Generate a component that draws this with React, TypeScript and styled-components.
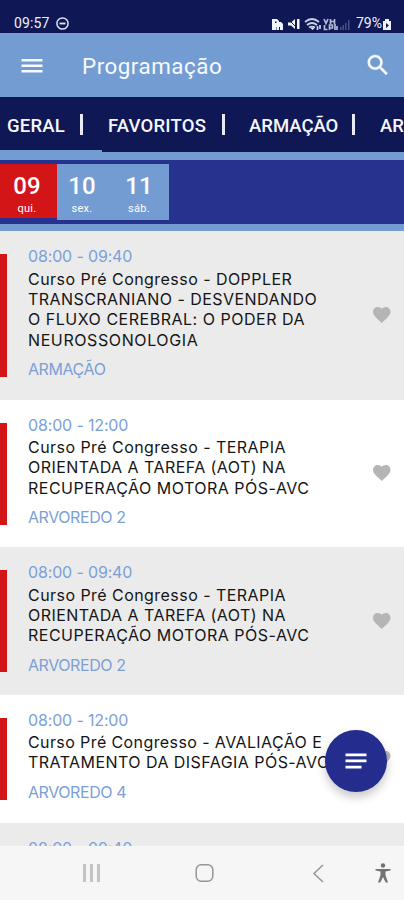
import React from "react";
import styled, { createGlobalStyle } from "styled-components";

const Global = createGlobalStyle`
  * { box-sizing: border-box; }
  body { margin: 0; font-family: Roboto, "Liberation Sans", sans-serif; }
`;

const Screen = styled.div`
  position: relative;
  width: 404px;
  height: 900px;
  overflow: hidden;
  display: flex;
  flex-direction: column;
  background: #fff;
`;

const StatusBar = styled.header`
  flex: none;
  height: 33px;
  padding: 14px 12px 0 14px;
  display: flex;
  justify-content: space-between;
  background: #0f1855;
  color: #eef0fa;
  font-size: 14px;
  line-height: 19px;
`;

const StatusGroup = styled.div<{ $gap: number }>`
  display: flex;
  align-items: center;
  height: 19px;
  gap: ${(p) => p.$gap}px;
`;

const Clock = styled.span`
  letter-spacing: 0.15px;
`;

const Battery = styled.span`
  letter-spacing: 0;
`;

const AppBar = styled.div`
  flex: none;
  height: 64px;
  padding: 2px 14px 0 21px;
  display: flex;
  align-items: center;
  background: #739cd3;
  color: #f8faff;
  svg { display: block; }
`;

const Title = styled.h1`
  flex: 1;
  margin: 0 0 0 39px;
  font-size: 22.4px;
  font-weight: 400;
  letter-spacing: 0.5px;
`;

const TabBar = styled.nav`
  flex: none;
  height: 63px;
  display: flex;
  overflow: hidden;
  background: linear-gradient(#0f1855 55px, #739cd3 55px);
`;

const Tab = styled.div<{ $width: number; $pad: number; $active?: boolean; $spacing?: number }>`
  flex: none;
  width: ${(p) => p.$width}px;
  height: 56px;
  padding: ${(p) => (p.$active ? "4px" : "1px")} 0 0 ${(p) => p.$pad}px;
  display: flex;
  align-items: center;
  white-space: nowrap;
  color: #f5f6fc;
  font-size: 18.5px;
  font-weight: 500;
  letter-spacing: ${(p) => p.$spacing ?? 0}px;
  border-bottom: ${(p) => (p.$active ? "3px solid #739cd3" : "0")};
`;

const Divider = styled.i<{ $gap: number }>`
  width: 3px;
  height: 21px;
  margin-left: ${(p) => p.$gap}px;
  margin-top: -2px;
  background: #e9eaf3;
`;

const DateBar = styled.div`
  flex: none;
  height: 71px;
  padding-top: 4px;
  display: flex;
  background: #27328e;
  border-bottom: 7px solid #739cd3;
`;

const Day = styled.div<{ $selected?: boolean; $left: number; $width: number }>`
  width: ${(p) => p.$width}px;
  height: ${(p) => (p.$selected ? 54 : 56)}px;
  padding: 9px 0 0 ${(p) => p.$left}px;
  background: ${(p) => (p.$selected ? "#d31518" : "#739cd3")};
  color: #fff;
`;

const DayStack = styled.div`
  width: 30px;
  display: flex;
  flex-direction: column;
  align-items: center;
`;

const DayNumber = styled.b`
  font-size: 24px;
  line-height: 26px;
  font-weight: 500;
`;

const DayName = styled.span`
  font-size: 11px;
  line-height: 20px;
  letter-spacing: 0.3px;
`;

const List = styled.main`
  flex: 1;
  min-height: 0;
  overflow: hidden;
`;

const Row = styled.article<{ $shade: boolean; $height: number }>`
  height: ${(p) => p.$height}px;
  display: flex;
  align-items: stretch;
  background: ${(p) => (p.$shade ? "#ebebeb" : "#ffffff")};
`;

const Marker = styled.i`
  flex: none;
  width: 7px;
  margin: 23px 0 22.5px;
  background: #d31518;
`;

const Details = styled.div`
  width: 354px;
  padding: 15.4px 0 0 21px;
  font-family: Inter, Roboto, sans-serif;
  font-size: 16px;
  line-height: 20.3px;
  white-space: nowrap;
`;

const Time = styled.div`
  margin-bottom: 2px;
  color: #7b9fd7;
  letter-spacing: -0.15px;
`;

const Line = styled.div<{ $spacing?: number }>`
  color: #151515;
  letter-spacing: ${(p) => p.$spacing ?? 0.45}px;
`;

const Place = styled.div`
  margin-top: 9px;
  color: #7b9fd7;
  letter-spacing: -0.42px;
`;

const Favorite = styled.div`
  width: 42px;
  display: flex;
  align-items: center;
  justify-content: center;
`;

const Fab = styled.button`
  position: absolute;
  left: 324.5px;
  top: 729.5px;
  width: 62px;
  height: 62px;
  padding: 0;
  border: 0;
  border-radius: 50%;
  display: flex;
  align-items: center;
  justify-content: center;
  background: #242d8e;
  box-shadow: 0 5px 10px rgba(0, 0, 0, 0.22);
`;

const NavBar = styled.footer`
  flex: none;
  height: 54px;
  background: #f6f6f6;
  display: grid;
  grid-template-columns: 184px 41px 137px 42px;
  align-items: center;
  svg { display: block; }
`;

const NavItem = styled.div<{ $left: number }>`
  padding-left: ${(p) => p.$left}px;
`;

type TextLine = { text: string; spacing?: number };
type Session = { time: string; lines: TextLine[]; place: string; height: number };

const aot: TextLine[] = [
  { text: "Curso Pré Congresso - TERAPIA" },
  { text: "ORIENTADA A TAREFA (AOT) NA" },
  { text: "RECUPERAÇÃO MOTORA PÓS-AVC", spacing: 0.5 },
];

const sessions: Session[] = [
  {
    time: "08:00 - 09:40",
    lines: [
      { text: "Curso Pré Congresso - DOPPLER" },
      { text: "TRANSCRANIANO - DESVENDANDO" },
      { text: "O FLUXO CEREBRAL: O PODER DA", spacing: 0.52 },
      { text: "NEUROSSONOLOGIA", spacing: 0.6 },
    ],
    place: "ARMAÇÃO",
    height: 168.5,
  },
  { time: "08:00 - 12:00", lines: aot, place: "ARVOREDO 2", height: 147.5 },
  { time: "08:00 - 09:40", lines: aot, place: "ARVOREDO 2", height: 147.5 },
  {
    time: "08:00 - 12:00",
    lines: [
      { text: "Curso Pré Congresso - AVALIAÇÃO E", spacing: 0.4 },
      { text: "TRATAMENTO DA DISFAGIA PÓS-AVC" },
    ],
    place: "ARVOREDO 4",
    height: 128,
  },
  { time: "08:00 - 09:40", lines: [], place: "", height: 128 },
];

const Heart = () => (
  <svg width="17.5" height="16" viewBox="2 3 20 18.35" preserveAspectRatio="none" fill="#b5b5b5">
    <path d="M12 21.35l-1.45-1.32C5.4 15.36 2 12.28 2 8.5 2 5.42 4.42 3 7.5 3c1.74 0 3.41.81 4.5 2.09C13.09 3.81 14.76 3 16.5 3 19.58 3 22 5.42 22 8.5c0 3.78-3.4 6.86-8.55 11.54L12 21.35z" />
  </svg>
);

export default function App() {
  return (
    <Screen>
      <Global />
      <StatusBar>
        <StatusGroup $gap={6}>
          <Clock>09:57</Clock>
          <svg width="13" height="13" viewBox="0 0 13 13" fill="none" stroke="#dfe3f2" strokeWidth="1.5">
            <circle cx="6.5" cy="6.5" r="5.6" />
            <path d="M3.5 6.5h6" strokeWidth="1.8" />
          </svg>
        </StatusGroup>
        <StatusGroup $gap={0}>
          <svg width="84" height="14" viewBox="0 0 84 14" fill="#f1f3fb">
            <path d="M0 2h5l2 2v1h2l2 2v6H8v-3H7v3H4.500v-3H4v3H0z" />
            <path d="M3 4.500h1.500V6H3z" fill="#0f1855" />
            <path d="M16 5.500h3l4-3.500v10l-4-3.500h-3zM25 2h2.500v10H25z" />
            <path d="M16 2l9 9" stroke="#0f1855" strokeWidth="1" />
            <g fill="none" stroke="#ccd1e7" strokeWidth="1.7">
              <path d="M33 5q7-6 14 0M35 8q5-4 10 0M37 10.500q3-2 6 0" />
              <path d="M45.500 9v4M48 8v4" />
            </g>
            <path d="M38 10.500l2.500 2.500 2.500-2.500z" />
            <g fill="none" stroke="#b3b8d6" strokeWidth="1.7">
              <path d="M52 2l2 4.500L56 2M58.500 2v5M58.500 4.500h4M62.500 2v5M52.500 8v4.500h3M57.500 13V8h3v3h-3M63 7v6M65 9v4" />
            </g>
            <path d="M68 10h1.500v3H68zM70.500 8H72v5h-1.500zM73 6h1.500v7H73zM76 3h1.500v10H76z" fill="#484f84" />
          </svg>
          <Battery>79%</Battery>
          <svg width="10" height="13" viewBox="0 0 10 13">
            <path d="M3 2h4v2h2v9H1V4h2z" fill="#f1f3fb" />
            <path d="M4 6l3 2.5L4 11z" fill="#0f1855" />
          </svg>
        </StatusGroup>
      </StatusBar>

      <AppBar>
        <svg width="22" height="16" viewBox="0 0 22 16" fill="#f8faff">
          <path d="M.5 1h21v2.6H.5zM.5 6.500h21v2.600H.5zM.5 12h21v2.600H.5z" />
        </svg>
        <Title>Programação</Title>
        <svg width="24" height="24" viewBox="1.5 2.2 21 21" fill="#f8faff">
          <path d="M15.5 14h-.79l-.28-.27C15.41 12.59 16 11.11 16 9.5 16 5.91 13.09 3 9.5 3S3 5.91 3 9.5 5.91 16 9.5 16c1.61 0 3.09-.59 4.23-1.57l.27.28v.79l5 4.99L20.49 19l-4.99-5zm-6 0C7.01 14 5 11.99 5 9.5S7.01 5 9.5 5 14 7.01 14 9.5 11.99 14 9.5 14z" stroke="#f8faff" strokeWidth=".3" />
        </svg>
      </AppBar>

      <TabBar>
        <Tab $width={102} $pad={7} $active $spacing={0.2}>GERAL<Divider $gap={15} /></Tab>
        <Tab $width={140} $pad={6} $spacing={0.2}>FAVORITOS<Divider $gap={15.5} /></Tab>
        <Tab $width={132} $pad={7}>ARMAÇÃO<Divider $gap={14} /></Tab>
        <Tab $width={30} $pad={6}>AR</Tab>
      </TabBar>

      <DateBar>
        <Day $selected $left={12} $width={57}><DayStack><DayNumber>09</DayNumber><DayName>qui.</DayName></DayStack></Day>
        <Day $left={10} $width={56}><DayStack><DayNumber>10</DayNumber><DayName>sex.</DayName></DayStack></Day>
        <Day $left={11} $width={56}><DayStack><DayNumber>11</DayNumber><DayName>sáb.</DayName></DayStack></Day>
      </DateBar>

      <List>
        {sessions.map((s, i) => (
          <Row key={i} $shade={i % 2 === 0} $height={s.height}>
            <Marker />
            <Details>
              <Time>{s.time}</Time>
              {s.lines.map((line) => <Line key={line.text} $spacing={line.spacing}>{line.text}</Line>)}
              <Place>{s.place}</Place>
            </Details>
            <Favorite><Heart /></Favorite>
          </Row>
        ))}
      </List>

      <NavBar>
        <NavItem $left={82}>
          <svg width="20" height="18" viewBox="0 0 20 18" fill="#c4c4c4"><path d="M1 0h3v18H1zM8 0h3v18H8zM15 0h3v18h-3z" /></svg>
        </NavItem>
        <NavItem $left={11}>
          <svg width="20" height="20" viewBox="0 0 20 20" fill="none" stroke="#969696" strokeWidth="1.5"><rect x="1.2" y="1.7" width="16.600" height="16.600" rx="5" /></svg>
        </NavItem>
        <NavItem $left={87}>
          <svg width="14" height="20" viewBox="0 0 14 20" fill="none" stroke="#969696" strokeWidth="1.5"><path d="M11 2L2 10.5l9 8.5" /></svg>
        </NavItem>
        <NavItem $left={13}>
          <svg width="16" height="20" viewBox="0 0 16 20" fill="#737373">
            <circle cx="8" cy="2.5" r="2.200" />
            <path d="M.5 6h15v1.600l-5 .8v3.800L13 19.500h-2.300L8 14l-2.700 5.500H3l2.500-7.300V8.400l-5-.8z" />
          </svg>
        </NavItem>
      </NavBar>

      <Fab aria-label="Menu">
        <svg width="22" height="16" viewBox="0 0 22 16" fill="#fff"><path d="M.5.5h21v2.700H.5zM.5 6.500h21v2.700H.5zM.5 12.700h16v2.700H.5z" /></svg>
      </Fab>
    </Screen>
  );
}
